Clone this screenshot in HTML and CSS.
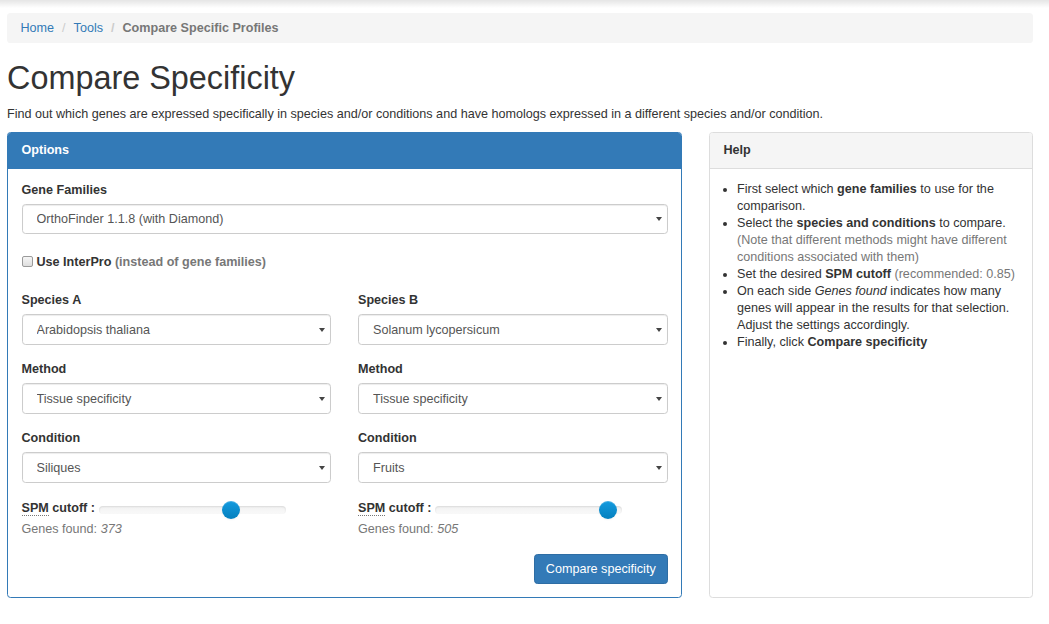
FILE: index.html
```html
<!DOCTYPE html>
<html lang="en">
<head>
<meta charset="utf-8">
<title>Compare Specificity</title>
<link rel="stylesheet" href="styles.css">
</head>
<body>
<div class="page">
  <ol class="breadcrumb">
    <li><a href="#">Home</a></li>
    <li><a href="#">Tools</a></li>
    <li class="active">Compare Specific Profiles</li>
  </ol>
  <h1>Compare Specificity</h1>
  <p class="intro">Find out which genes are expressed specifically in species and/or conditions and have homologs expressed in a different species and/or condition.</p>
  <div class="layout">
    <div class="panel panel-primary">
      <div class="panel-heading">Options</div>
      <form class="panel-body">
        <div class="form-group">
          <label class="field-label">Gene Families</label>
          <div class="select-wrap"><select class="form-control"><option>OrthoFinder 1.1.8 (with Diamond)</option></select></div>
        </div>
        <div class="checkbox">
          <label><input type="checkbox" class="check">Use InterPro <span class="muted">(instead of gene families)</span></label>
        </div>
        <div class="cols">
          <div class="col">
            <div class="form-group">
              <label class="field-label">Species A</label>
              <div class="select-wrap"><select class="form-control"><option>Arabidopsis thaliana</option></select></div>
            </div>
            <div class="form-group">
              <label class="field-label">Method</label>
              <div class="select-wrap"><select class="form-control"><option>Tissue specificity</option></select></div>
            </div>
            <div class="form-group">
              <label class="field-label">Condition</label>
              <div class="select-wrap"><select class="form-control"><option>Siliques</option></select></div>
            </div>
            <div class="spm">
              <span class="spm-label"><abbr title="Specificity Measure">SPM</abbr> cutoff :</span>
              <input type="range" class="range" min="0" max="1" step="0.01" value="0.73">
            </div>
            <div class="found">Genes found: <em>373</em></div>
          </div>
          <div class="col">
            <div class="form-group">
              <label class="field-label">Species B</label>
              <div class="select-wrap"><select class="form-control"><option>Solanum lycopersicum</option></select></div>
            </div>
            <div class="form-group">
              <label class="field-label">Method</label>
              <div class="select-wrap"><select class="form-control"><option>Tissue specificity</option></select></div>
            </div>
            <div class="form-group">
              <label class="field-label">Condition</label>
              <div class="select-wrap"><select class="form-control"><option>Fruits</option></select></div>
            </div>
            <div class="spm">
              <span class="spm-label"><abbr title="Specificity Measure">SPM</abbr> cutoff :</span>
              <input type="range" class="range" min="0" max="1" step="0.01" value="0.97">
            </div>
            <div class="found">Genes found: <em>505</em></div>
          </div>
        </div>
        <div class="actions"><button type="button" class="btn">Compare specificity</button></div>
      </form>
    </div>
    <div class="panel panel-default">
      <div class="panel-heading">Help</div>
      <div class="panel-body help-body">
        <ul class="help-list">
          <li>First select which <strong>gene families</strong> to use for the comparison.</li>
          <li>Select the <strong>species and conditions</strong> to compare. <span class="muted">(Note that different methods might have different conditions associated with them)</span></li>
          <li>Set the desired <strong>SPM cutoff</strong> <span class="muted">(recommended: 0.85)</span></li>
          <li>On each side <em>Genes found</em> indicates how many genes will appear in the results for that selection. Adjust the settings accordingly.</li>
          <li>Finally, click <strong>Compare specificity</strong></li>
        </ul>
      </div>
    </div>
  </div>
</div>
</body>
</html>
```
FILE: styles.css
```css
* { box-sizing: border-box; }

body {
  margin: 0;
  font-family: "Liberation Sans", Arial, sans-serif;
  font-size: 12.6px;
  line-height: 18px;
  color: #333;
  background: #fff linear-gradient(to bottom, rgba(0,0,0,0.10), rgba(0,0,0,0) 8px) no-repeat;
}

.page {
  padding: 13px 16px 0 7px;
}

a { color: #337ab7; text-decoration: none; }

.breadcrumb {
  list-style: none;
  margin: 0 0 18px;
  padding: 6px 13.5px;
  background: #f5f5f5;
  border-radius: 3.6px;
}
.breadcrumb li { display: inline-block; }
.breadcrumb li + li::before {
  content: "/\00a0";
  padding: 0 4.5px;
  color: #ccc;
}
.breadcrumb .active { color: #777; font-weight: bold; }

h1 {
  font-size: 32.4px;
  font-weight: normal;
  line-height: 1.1;
  margin: 18px 0 8px;
}

.intro { margin: 0 0 9px; }

.layout {
  display: grid;
  grid-template-columns: 675px 324px;
  column-gap: 27px;
}

.panel {
  border: 1px solid #ddd;
  border-radius: 3.6px;
  background: #fff;
  margin-bottom: 18px;
}
.panel-heading {
  padding: 8.5px 13.5px;
  border-bottom: 1px solid transparent;
  border-radius: 2.6px 2.6px 0 0;
  font-weight: bold;
}
.panel-primary { border-color: #337ab7; }
.panel-primary .panel-heading { background: #337ab7; color: #fff; border-color: #337ab7; }
.panel-default .panel-heading { background: #f5f5f5; color: #333; border-color: #ddd; }

.panel-body { padding: 12px 13.5px 13.5px; margin: 0; }

.form-group { margin-bottom: 15.5px; }
.field-label { display: block; font-weight: bold; margin-bottom: 5px; }

.select-wrap { position: relative; }
.select-wrap::after {
  content: "";
  position: absolute;
  right: 6px;
  top: 50%;
  margin-top: -2px;
  border-left: 3px solid transparent;
  border-right: 3px solid transparent;
  border-top: 4px solid #444;
  pointer-events: none;
}
.form-control {
  display: block;
  width: 100%;
  height: 30.6px;
  padding: 5px 20px 5px 14px;
  font: inherit;
  color: #555;
  background: #fff;
  border: 1px solid #ccc;
  border-radius: 3.6px;
  box-shadow: inset 0 1px 1px rgba(0,0,0,.075);
  -webkit-appearance: none;
  appearance: none;
  outline: none;
}

.checkbox { margin: 19px 0 20px; }
.checkbox label { font-weight: bold; }
.check {
  -webkit-appearance: none;
  appearance: none;
  width: 11px;
  height: 11px;
  margin: 0 4px 0 0;
  vertical-align: -1px;
  border: 1px solid #9a9a9a;
  border-radius: 2px;
  background: linear-gradient(#f6f6f6, #dedede);
}
.muted { color: #777; }

.cols {
  display: grid;
  grid-template-columns: 1fr 1fr;
  column-gap: 27px;
}

.spm {
  display: flex;
  align-items: center;
  height: 18px;
}
.spm-label { font-weight: bold; margin-right: 4px; white-space: nowrap; }
abbr {
  text-decoration: none;
  border-bottom: 1px dotted #777;
  cursor: help;
}

.range {
  -webkit-appearance: none;
  appearance: none;
  width: 187px;
  height: 18px;
  margin: 4px 0 0;
  padding: 0;
  background: transparent;
}
.range::-webkit-slider-runnable-track {
  height: 8px;
  border-radius: 4px;
  background: linear-gradient(#f2f2f2, #f9f9f9);
  box-shadow: inset 0 1px 2px rgba(0,0,0,.1);
}
.range::-webkit-slider-thumb {
  -webkit-appearance: none;
  appearance: none;
  width: 18px;
  height: 18px;
  margin-top: -5px;
  border: none;
  border-radius: 50%;
  background: linear-gradient(#149bdf, #0480be);
  box-shadow: inset 0 1px 0 rgba(255,255,255,.2), 0 1px 2px rgba(0,0,0,.05);
}

.found { color: #777; margin-top: 3px; }

.actions {
  display: flex;
  justify-content: flex-end;
  margin-top: 16px;
}
.btn {
  font: inherit;
  color: #fff;
  background: #337ab7;
  border: 1px solid #2e6da4;
  border-radius: 3.6px;
  padding: 5px 10.8px;
  line-height: 18px;
  cursor: pointer;
}

.help-list {
  margin: 0;
  padding-left: 13.5px;
  line-height: 17px;
}
```
